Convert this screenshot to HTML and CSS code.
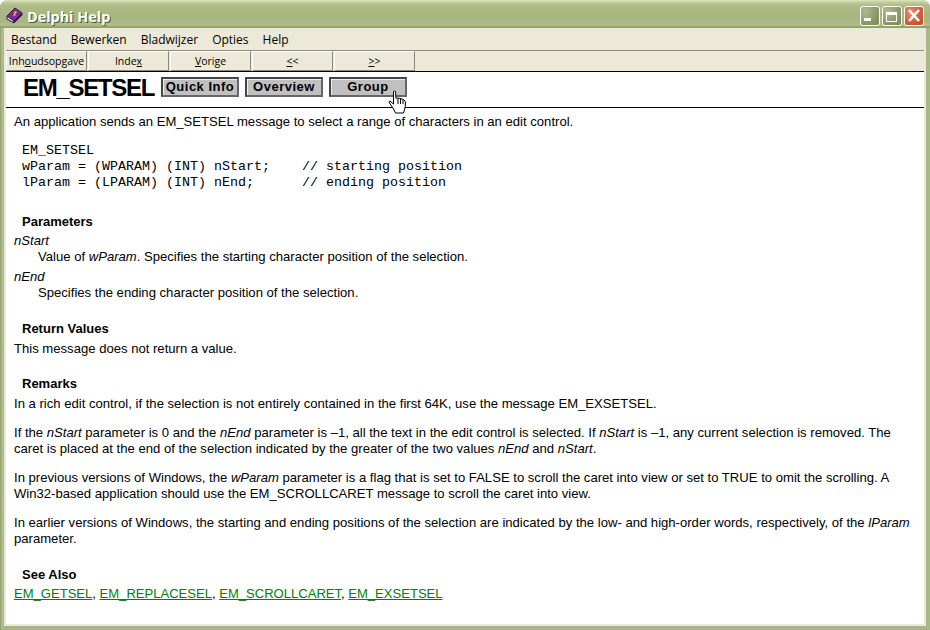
FILE: index.html
```html
<!DOCTYPE html>
<html lang="nl">
<head>
<meta charset="utf-8">
<title>Delphi Help</title>
<link rel="stylesheet" href="styles.css">
</head>
<body>
<div class="window">
  <header class="titlebar">
    <svg class="book" width="17" height="17" viewBox="0 0 17 17">
      <polygon points="1,9 9,1 16,6 8,14" fill="#7a2a9a" stroke="#3a1050" stroke-width="1"/>
      <polygon points="1,9 8,14 8,16 1,12" fill="#e8e4f0" stroke="#3a1050" stroke-width="1"/>
      <polygon points="8,14 16,6 16,8 8,16" fill="#4a1a70" stroke="#3a1050" stroke-width="1"/>
      <polygon points="7,6 10,4 11,5 9,7 10,8 8,9 7,8 9,6" fill="#f2d020"/>
    </svg>
    <span class="title">Delphi Help</span>
    <div class="controls">
      <span class="ctl"><svg width="20" height="20" viewBox="0 0 20 20"><rect x="4" y="12" width="7" height="3" fill="#fff"/></svg></span>
      <span class="ctl"><svg width="20" height="20" viewBox="0 0 20 20"><rect x="4.5" y="6.5" width="10" height="9" fill="none" stroke="#fff"/><rect x="4" y="6" width="11" height="3" fill="#fff"/></svg></span>
      <span class="ctl close"><svg width="20" height="20" viewBox="0 0 20 20"><path d="M5 4 L15 15 M15 4 L5 15" stroke="#fff" stroke-width="2.6"/></svg></span>
    </div>
  </header>
  <div class="client">
    <nav class="menubar">
      <span>Bestand</span><span>Bewerken</span><span>Bladwijzer</span><span>Opties</span><span>Help</span>
    </nav>
    <div class="toolbar">
      <button class="tb">Inh<u>o</u>udsopgave</button>
      <button class="tb">Inde<u>x</u></button>
      <button class="tb"><u>V</u>orige</button>
      <button class="tb"><u>&lt;</u>&lt;</button>
      <button class="tb"><u>&gt;</u>&gt;</button>
    </div>
    <div class="band">
      <h1>EM_SETSEL</h1>
      <button class="gbtn">Quick Info</button>
      <button class="gbtn">Overview</button>
      <button class="gbtn">Group</button>
      <svg class="cursor" width="19" height="24" viewBox="0 0 19 24">
        <path d="M5.5 1.5 Q6.5 0.5 7.5 1.5 L8 8.5 L10 8 L12 8.5 L14 9 L16 10 Q17.5 11 17.5 13 L17 18 L15.5 23 H7.5 L5.5 19 L1.5 13 Q0.5 11 2 11 L5.5 14 Z" fill="#fff" stroke="#000" stroke-width="1"/>
        <path d="M10 9 V14 M12.5 9 V14 M15 10 V14" stroke="#000" stroke-width="1" fill="none"/>
      </svg>
    </div>
    <main class="doc">
      <p>An application sends an EM_SETSEL message to select a range of characters in an edit control.</p>
      <pre>EM_SETSEL
wParam = (WPARAM) (INT) nStart;    // starting position
lParam = (LPARAM) (INT) nEnd;      // ending position</pre>
      <h3>Parameters</h3>
      <dl>
        <dt>nStart</dt>
        <dd>Value of <i>wParam</i>. Specifies the starting character position of the selection.</dd>
        <dt>nEnd</dt>
        <dd>Specifies the ending character position of the selection.</dd>
      </dl>
      <h3>Return Values</h3>
      <p class="lead">This message does not return a value.</p>
      <h3 class="tight">Remarks</h3>
      <p class="lead">In a rich edit control, if the selection is not entirely contained in the first 64K, use the message EM_EXSETSEL.</p>
      <p>If the <i>nStart</i> parameter is 0 and the <i>nEnd</i> parameter is –1, all the text in the edit control is selected. If <i>nStart</i> is –1, any current selection is removed. The caret is placed at the end of the selection indicated by the greater of the two values <i>nEnd</i> and <i>nStart</i>.</p>
      <p>In previous versions of Windows, the <i>wParam</i> parameter is a flag that is set to FALSE to scroll the caret into view or set to TRUE to omit the scrolling. A Win32-based application should use the EM_SCROLLCARET message to scroll the caret into view.</p>
      <p>In earlier versions of Windows, the starting and ending positions of the selection are indicated by the low- and high-order words, respectively, of the <i>lParam</i> parameter.</p>
      <h3>See Also</h3>
      <p class="links"><a href="#">EM_GETSEL</a>, <a href="#">EM_REPLACESEL</a>, <a href="#">EM_SCROLLCARET</a>, <a href="#">EM_EXSETSEL</a></p>
    </main>
  </div>
</div>
</body>
</html>
```

FILE: styles.css
```css
* { box-sizing: border-box; }
html, body { margin: 0; padding: 0; background: #fff; }
body { width: 930px; height: 630px; overflow: hidden; }

.window {
  width: 930px;
  height: 630px;
  display: flex;
  flex-direction: column;
  border-radius: 8px 8px 0 0;
  overflow: hidden;
  background: linear-gradient(90deg, #8a9a68 0, #b4c090 2px, #a8b688 4px);
}

.titlebar {
  height: 28px;
  flex: none;
  display: flex;
  align-items: center;
  padding: 0 6px 0 6px;
  background: linear-gradient(180deg, #dfe6c0 0, #c4cfa0 2px, #b0bd88 5px, #a8b680 14px, #aab784 22px, #b3c08e 25px, #8ea268 27px, #8ea268 28px);
}
.book { flex: none; margin-top: 2px; }
.title {
  margin-left: 4px;
  font: bold 14.4px "Open Sans", "Liberation Sans", sans-serif;
  color: #fff;
  text-shadow: 1px 1px 0 #4a5a30;
  flex: 1;
  padding-top: 5px;
}
.controls { display: flex; gap: 2px; margin-top: 4px; }
.ctl {
  width: 20px;
  height: 20px;
  border: 1px solid #fff;
  border-radius: 3px;
  background: radial-gradient(circle at 25% 25%, #b0ba90 0, #8c9868 60%, #7a8858 100%);
  display: block;
  overflow: hidden;
}
.ctl svg { display: block; margin: -1px; }
.close { background: radial-gradient(circle at 30% 30%, #e89078 0, #d0603a 55%, #b84a28 100%); }

.client {
  flex: 1;
  margin: 0 4px 4px 4px;
  background: #ece9d8;
  display: flex;
  flex-direction: column;
  padding-right: 2px;
  padding-bottom: 2px;
  min-height: 0;
}

.menubar {
  height: 22px;
  flex: none;
  display: flex;
  align-items: center;
  gap: 14px;
  padding: 0 0 0 7px;
  background: #ece9d8;
  font: 12px "Open Sans", "Liberation Sans", sans-serif;
  color: #000;
}

.toolbar {
  height: 22px;
  flex: none;
  margin-left: 2px;
  display: flex;
  gap: 1px;
  border-top: 1px solid #8a8a80;
  border-bottom: 1px solid #000;
  background: #ece9d8;
}
.tb {
  width: 81px;
  height: 20px;
  padding: 0;
  border: 1px solid;
  border-color: #fff #8a8878 #8a8878 #fff;
  background: #ece9d8;
  font: 10.5px "Open Sans", "Liberation Sans", sans-serif;
  color: #000;
  white-space: nowrap;
}

.band {
  position: relative;
  height: 36px;
  flex: none;
  margin-left: 2px;
  display: flex;
  align-items: flex-start;
  gap: 6px;
  padding: 5px 0 0 17px;
  background: #fff;
  border-bottom: 1px solid #000;
}
h1 {
  width: 132px;
  margin: 0;
  font: bold 24px/22px "Liberation Sans", Arial, sans-serif;
  letter-spacing: -1.3px;
  white-space: nowrap;
  color: #000;
}
.gbtn {
  width: 78px;
  height: 20px;
  padding: 0 0 1px;
  border: 2px solid;
  border-color: #444 #666 #666 #444;
  outline: none;
  background: #c0c0c0;
  box-shadow: inset 1px 1px 0 #eee;
  font: bold 13px "Liberation Sans", Arial, sans-serif;
  letter-spacing: 0.5px;
  color: #000;
}
.cursor { position: absolute; left: 382px; top: 18px; }

.doc {
  flex: 1;
  margin-left: 2px;
  background: #fff;
  padding: 6px 8px 0 8px;
  font: 13.1px/16px "Liberation Sans", Arial, sans-serif;
  color: #000;
  overflow: hidden;
}
p { margin: 0; }
p + p { margin-top: 13px; }
pre {
  margin: 13px 0 23px 8px;
  font: 13.33px/16px "Liberation Mono", "Courier New", monospace;
}
h3 {
  margin: 20px 0 3px 8px;
  font: bold 13px/16px "Liberation Sans", Arial, sans-serif;
}
h3.tight { margin-top: 19px; }
.lead { margin-top: 4px; }
dl { margin: 0; }
dt { font-style: italic; }
dd { margin: 0 0 4px 24px; }
.links { font-size: 13.05px; margin-top: 0; }
.links a { color: #008000; text-decoration: underline; }
```
